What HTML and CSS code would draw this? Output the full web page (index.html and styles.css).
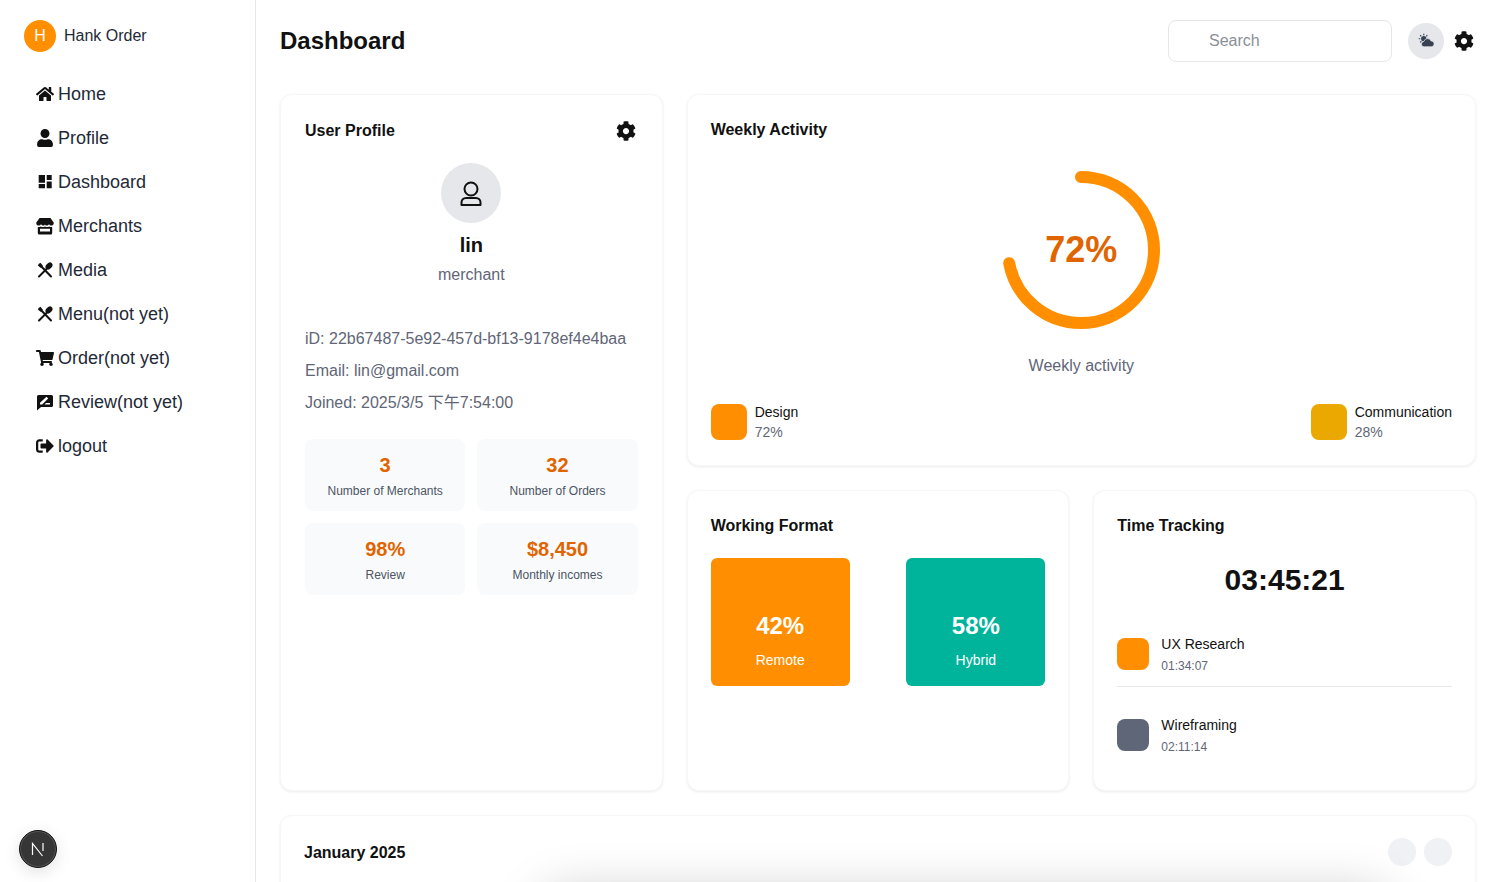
FILE: index.html
```html
<!DOCTYPE html>
<html>
<head>
    <meta charset="UTF-8">
    <title>Hank Order: Dashboard</title>
    <link rel="stylesheet" href="styles.css">
</head>
<body>
    <div class="app">
        <aside class="sidebar">
            <div class="brand">
                <span class="brand-avatar">H</span>
                <span class="brand-name">Hank Order</span>
            </div>
            <nav class="nav">
                <a class="nav-item" href="#">
                    <svg class="nav-icon" viewBox="0 0 576 512"><path d="M280.37 148.26L96 300.11V464a16 16 0 0 0 16 16l112.06-.29a16 16 0 0 0 15.92-16V368a16 16 0 0 1 16-16h64a16 16 0 0 1 16 16v95.64a16 16 0 0 0 16 16.05L464 480a16 16 0 0 0 16-16V300L295.67 148.26a12.19 12.19 0 0 0-15.3 0zM571.6 251.47L488 182.56V44.05a12 12 0 0 0-12-12h-56a12 12 0 0 0-12 12v72.61L318.47 43a48 48 0 0 0-61 0L4.34 251.47a12 12 0 0 0-1.6 16.9l25.5 31A12 12 0 0 0 45.15 301l235.22-193.74a12.19 12.19 0 0 1 15.3 0L530.9 301a12 12 0 0 0 16.9-1.6l25.5-31a12 12 0 0 0-1.7-16.93z"/></svg>
                    Home
                </a>
                <a class="nav-item" href="#">
                    <svg class="nav-icon" viewBox="0 0 448 512"><path d="M224 256c70.7 0 128-57.3 128-128S294.7 0 224 0 96 57.3 96 128s57.3 128 128 128zm89.6 32h-16.7c-22.2 10.2-46.9 16-72.9 16s-50.6-5.8-72.9-16h-16.7C60.2 288 0 348.2 0 422.4V464c0 26.5 21.5 48 48 48h352c26.5 0 48-21.5 48-48v-41.6c0-74.2-60.2-134.4-134.4-134.4z"/></svg>
                    Profile
                </a>
                <a class="nav-item" href="#">
                    <svg class="nav-icon" viewBox="0 0 18 18"><path d="M2.700 2H9v7.700H2.700zM10.700 2h5v5h-5zM10.700 8.500h5v6.800h-5zM2.700 11H9v4.300H2.700z"/></svg>
                    Dashboard
                </a>
                <a class="nav-item" href="#">
                    <svg class="nav-icon" viewBox="0 0 18 18"><path d="M3.500 1h11l3.300 4.700c0 1.800-1 2.900-2.500 2.900-1 0-1.800-.5-2.300-1.300-.5.8-1.400 1.300-2.300 1.300-.9 0-1.700-.5-1.700-1.300 0 .8-.8 1.300-1.700 1.300-.9 0-1.800-.5-2.300-1.300-.5.8-1.300 1.300-2.300 1.300C1.200 8.600.2 7.500.2 5.700zM1.800 10c1.100.2 2.200 0 3-.5 1.300.8 2.900.8 4.200 0 1.300.8 2.900.8 4.200 0 .8.5 1.900.7 3 .5v6a1.500 1.500 0 0 1-1.500 1.500H3.300A1.500 1.500 0 0 1 1.800 16zm2.200 1.800v2.800h10v-2.800z"/></svg>
                    Merchants
                </a>
                <a class="nav-item" href="#">
                    <svg class="nav-icon" viewBox="0 0 18 18"><use href="#utensils"/></svg>
                    Media
                </a>
                <a class="nav-item" href="#">
                    <svg class="nav-icon" viewBox="0 0 18 18"><use href="#utensils"/></svg>
                    Menu(not yet)
                </a>
                <a class="nav-item" href="#">
                    <svg class="nav-icon" viewBox="0 0 576 512"><path d="M528.12 301.319l47.273-208C578.806 78.301 567.391 64 551.99 64H159.208l-9.166-44.81C147.758 8.021 137.93 0 126.529 0H24C10.745 0 0 10.745 0 24v16c0 13.255 10.745 24 24 24h69.883l70.248 343.435C147.325 417.1 136 435.222 136 456c0 30.928 25.072 56 56 56s56-25.072 56-56c0-15.674-6.447-29.835-16.824-40h209.647C430.447 426.165 424 440.326 424 456c0 30.928 25.072 56 56 56s56-25.072 56-56c0-22.172-12.888-41.332-31.579-50.405l5.517-24.276c3.413-15.018-8.002-29.319-23.403-29.319H218.117l-6.545-32h293.145c11.206 0 20.92-7.754 23.403-18.681z"/></svg>
                    Order(not yet)
                </a>
                <a class="nav-item" href="#">
                    <svg class="nav-icon" viewBox="0 0 18 18"><path fill-rule="evenodd" d="M2.500 2h13A1.500 1.500 0 0 1 17 3.500v9a1.500 1.500 0 0 1-1.500 1.500H5l-4 3.500V3.500A1.500 1.500 0 0 1 2.500 2zM4 11.500h2.200l6-6-1.700-1.700-6.500 6zM8.500 11.500H14V10H10z"/></svg>
                    Review(not yet)
                </a>
                <a class="nav-item" href="#">
                    <svg class="nav-icon" viewBox="0 0 512 512"><path d="M497 273L329 441c-15 15-41 4.500-41-17v-96H152c-13.300 0-24-10.700-24-24v-96c0-13.300 10.700-24 24-24h136V88c0-21.400 25.900-32 41-17l168 168c9.300 9.400 9.300 24.600 0 34zM192 436v-40c0-6.600-5.400-12-12-12H96c-17.700 0-32-14.300-32-32V160c0-17.700 14.300-32 32-32h84c6.600 0 12-5.400 12-12V76c0-6.600-5.400-12-12-12H96c-53 0-96 43-96 96v192c0 53 43 96 96 96h84c6.600 0 12-5.400 12-12z"/></svg>
                    logout
                </a>
            </nav>
        </aside>

        <main class="main">
            <header class="topbar">
                <h1 class="page-title">Dashboard</h1>
                <div class="topbar-right">
                    <input class="search" type="text" placeholder="Search">
                    <button class="weather-btn">
                        <svg class="weather-icon" viewBox="0 0 18 18">
                            <circle cx="6.500" cy="6.500" r="3"/>
                            <path d="M6.500.8v1.700M2.500 2.500l1.200 1.200M.8 6.500h1.700M2.500 10.500l1.200-1.200M10.500 2.500L9.300 3.700" stroke="#374151" stroke-width="1.300" fill="none"/>
                            <path d="M7 15.500a3 3 0 0 1-.4-6 4.300 4.300 0 0 1 8.100-.6 3.300 3.300 0 0 1 .3 6.600z" stroke="#e5e7eb" stroke-width=".8"/>
                        </svg>
                    </button>
                    <svg class="cog" viewBox="0 0 512 512"><use href="#cog"/></svg>
                </div>
            </header>

            <div class="grid">
                <section class="card profile-card">
                    <div class="card-head">
                        <h2 class="card-title">User Profile</h2>
                        <svg class="cog" viewBox="0 0 512 512"><use href="#cog"/></svg>
                    </div>
                    <div class="profile-top">
                        <div class="profile-avatar">
                            <svg viewBox="0 0 30 30" width="30" height="30" fill="none" stroke="#111" stroke-width="2"><circle cx="15" cy="11" r="6.500"/><path d="M5.500 27v-2.500c0-2.500 2-4.500 4.500-4.500h10c2.500 0 4.500 2 4.500 4.500V27z" stroke-linejoin="round"/></svg>
                        </div>
                        <div class="profile-name">lin</div>
                        <div class="profile-role">merchant</div>
                    </div>
                    <div class="profile-info">
                        <p>iD: 22b67487-5e92-457d-bf13-9178ef4e4baa</p>
                        <p>Email: lin@gmail.com</p>
                        <p>Joined: 2025/3/5 下午7:54:00</p>
                    </div>
                    <div class="stats">
                        <div class="stat"><strong>3</strong><span>Number of Merchants</span></div>
                        <div class="stat"><strong>32</strong><span>Number of Orders</span></div>
                        <div class="stat"><strong>98%</strong><span>Review</span></div>
                        <div class="stat"><strong>$8,450</strong><span>Monthly incomes</span></div>
                    </div>
                </section>

                <section class="card weekly-card">
                    <h2 class="card-title">Weekly Activity</h2>
                    <div class="ring-wrap">
                        <svg class="ring" viewBox="0 0 160 160">
                            <circle cx="80" cy="80" r="73" fill="none" stroke="#ff8f00" stroke-width="12" stroke-linecap="round" stroke-dasharray="330.2 458.7" transform="rotate(-90 80 80)"/>
                        </svg>
                        <span class="ring-value">72%</span>
                    </div>
                    <div class="ring-label">Weekly activity</div>
                    <div class="legend">
                        <div class="legend-item">
                            <span class="swatch swatch-big orange"></span>
                            <div><div class="item-name">Design</div><div class="item-sub">72%</div></div>
                        </div>
                        <div class="legend-item">
                            <span class="swatch swatch-big amber"></span>
                            <div><div class="item-name">Communication</div><div class="item-sub">28%</div></div>
                        </div>
                    </div>
                </section>

                <section class="card format-card">
                    <h2 class="card-title">Working Format</h2>
                    <div class="format-grid">
                        <div class="format-box orange"><strong>42%</strong><span>Remote</span></div>
                        <div class="format-box teal"><strong>58%</strong><span>Hybrid</span></div>
                    </div>
                </section>

                <section class="card time-card">
                    <h2 class="card-title">Time Tracking</h2>
                    <div class="clock">03:45:21</div>
                    <div class="time-row with-line">
                        <span class="swatch orange"></span>
                        <div><div class="item-name">UX Research</div><div class="item-time">01:34:07</div></div>
                    </div>
                    <div class="time-row">
                        <span class="swatch slate"></span>
                        <div><div class="item-name">Wireframing</div><div class="item-time">02:11:14</div></div>
                    </div>
                </section>

                <section class="card calendar-card">
                    <h2 class="card-title">January 2025</h2>
                    <div class="cal-btns"><span class="cal-btn"></span><span class="cal-btn"></span></div>
                </section>
            </div>
        </main>
    </div>

    <!-- floating stuff on top of the page -->
    <div class="bottom-shade"></div>
    <div class="dev-badge">
        <svg viewBox="0 0 16 16" width="16" height="16" fill="none" stroke="#fff" stroke-width="1.200"><path d="M2.500 14V2.500l10 12.500M13 2v8"/></svg>
    </div>

    <svg class="defs" width="0" height="0">
        <defs>
            <path id="cog" d="M487.400 315.700l-42.600-24.600c4.300-23.200 4.300-47 0-70.200l42.600-24.600c4.900-2.800 7.100-8.600 5.500-14-11.100-35.600-30-67.800-54.700-94.600-3.800-4.100-10-5.100-14.800-2.300L380.800 110c-17.900-15.400-38.500-27.300-60.800-35.100V25.800c0-5.600-3.900-10.500-9.400-11.700-36.700-8.200-74.300-7.800-109.200 0-5.500 1.200-9.400 6.100-9.400 11.700V75c-22.200 7.900-42.800 19.800-60.800 35.100L88.700 85.500c-4.900-2.800-11-1.900-14.800 2.300-24.700 26.700-43.600 58.900-54.700 94.600-1.700 5.400.6 11.200 5.500 14L67.300 221c-4.300 23.200-4.300 47 0 70.200l-42.600 24.600c-4.900 2.800-7.100 8.600-5.500 14 11.100 35.600 30 67.800 54.700 94.600 3.800 4.100 10 5.100 14.800 2.300l42.600-24.600c17.900 15.400 38.500 27.300 60.800 35.100v49.200c0 5.600 3.900 10.500 9.400 11.700 36.700 8.200 74.300 7.800 109.200 0 5.500-1.200 9.400-6.100 9.400-11.700v-49.200c22.200-7.900 42.800-19.800 60.800-35.100l42.600 24.600c4.900 2.800 11 1.900 14.800-2.300 24.700-26.700 43.600-58.900 54.700-94.600 1.500-5.500-.7-11.300-5.600-14.100zM256 336c-44.100 0-80-35.900-80-80s35.900-80 80-80 80 35.900 80 80-35.900 80-80 80z"/>
            <g id="utensils">
                <path d="M3.500 3.500L15 15.500" stroke="#111" stroke-width="2" fill="none" stroke-linecap="round"/>
                <path d="M1.800 4.500L4.500 1.800 7 5 5 7z"/>
                <path d="M3 15.500l7.500-7.500" stroke="#111" stroke-width="2" fill="none" stroke-linecap="round"/>
                <ellipse cx="13" cy="5" rx="2.800" ry="4" transform="rotate(45 13 5)"/>
            </g>
        </defs>
    </svg>
</body>
</html>
```

FILE: styles.css
```css
* {
    box-sizing: border-box;
}

html, body {
    height: 100%;
    margin: 0;
    overflow: hidden;
}

body {
    background: #fff;
    color: #111827;
    font-family: "Liberation Sans", "Noto Sans CJK SC", sans-serif;
}

.app {
    display: flex;
    height: 882px;
    overflow: hidden;
}

/* sidebar */
.sidebar {
    width: 256px;
    flex-shrink: 0;
    border-right: 1px solid #e5e7eb;
    padding: 20px 24px;
}

.brand {
    display: flex;
    align-items: center;
    gap: 8px;
    margin-bottom: 20px;
}

.brand-avatar {
    width: 32px;
    height: 32px;
    border-radius: 50%;
    background: #ff8f00;
    color: #fff;
    display: flex;
    align-items: center;
    justify-content: center;
    font-size: 16px;
}

.brand-name {
    font-size: 16px;
    color: #1f2937;
}

.nav {
    display: flex;
    flex-direction: column;
}

.nav-item {
    height: 44px;
    display: flex;
    align-items: center;
    gap: 4px;
    padding-left: 12px;
    font-size: 18px;
    color: #1f2937;
    text-decoration: none;
}

.nav-icon {
    width: 18px;
    height: 18px;
    fill: #111;
    flex-shrink: 0;
}

/* main */
.main {
    flex: 1;
    min-width: 0;
    height: 882px;
    overflow: hidden;
    padding: 20px 24px 0;
}

.topbar {
    display: flex;
    align-items: center;
    justify-content: space-between;
    margin-bottom: 32px;
}

.page-title {
    margin: 0;
    font-size: 24px;
    font-weight: 700;
    color: #111;
}

.topbar-right {
    display: flex;
    align-items: center;
    gap: 16px;
    padding-right: 2px;
}

.search {
    width: 224px;
    height: 42px;
    border: 1px solid #e5e7eb;
    border-radius: 8px;
    padding: 0 16px 0 40px;
    font: inherit;
    font-size: 16px;
    outline: none;
}

.search::placeholder {
    color: #8b8f98;
}

.weather-btn {
    width: 36px;
    height: 36px;
    border: 0;
    border-radius: 50%;
    background: #e5e7eb;
    display: flex;
    align-items: center;
    justify-content: center;
    padding: 0;
    margin-right: -6px;
}

.weather-icon {
    width: 16px;
    height: 16px;
    fill: #374151;
}

.cog {
    width: 20px;
    height: 20px;
    fill: #111;
    flex-shrink: 0;
}

.grid {
    display: grid;
    grid-template-columns: repeat(3, 1fr);
    grid-template-rows: 372px 301px auto;
    gap: 24px;
}

.card {
    background: #fff;
    border: 1px solid #f6f7f8;
    border-radius: 12px;
    box-shadow: 0 1px 3px rgba(0, 0, 0, 0.08);
    padding: 23px;
}

.card-title {
    margin: 0;
    font-size: 16px;
    line-height: 24px;
    font-weight: 700;
    color: #111;
}

/* profile */
.profile-card {
    grid-row: 1 / 3;
    padding: 24px;
}

.card-head {
    display: flex;
    justify-content: space-between;
    align-items: center;
    padding-right: 2px;
}

.profile-top {
    display: flex;
    flex-direction: column;
    align-items: center;
    margin-top: 20px;
}

.profile-avatar {
    width: 60px;
    height: 60px;
    border-radius: 50%;
    background: #e5e7eb;
    display: flex;
    align-items: center;
    justify-content: center;
}

.profile-name {
    font-size: 20px;
    font-weight: 700;
    line-height: 24px;
    margin-top: 10px;
    color: #111;
}

.profile-role {
    font-size: 16px;
    line-height: 20px;
    margin-top: 8px;
    color: #5f6677;
}

.profile-info {
    margin-top: 42px;
    font-size: 16px;
    color: #5f6677;
}

.profile-info p {
    margin: 0;
    height: 32px;
    line-height: 24px;
}

.stats {
    display: grid;
    grid-template-columns: 1fr 1fr;
    gap: 12px;
    margin-top: 16px;
}

.stat {
    height: 72px;
    background: #f9fafb;
    border-radius: 8px;
    display: flex;
    flex-direction: column;
    align-items: center;
    padding-top: 14px;
}

.stat strong {
    font-size: 20px;
    line-height: 24px;
    color: #e06500;
}

.stat span {
    font-size: 12px;
    line-height: 16px;
    margin-top: 6px;
    color: #4b5563;
}

/* weekly */
.weekly-card {
    grid-column: 2 / 4;
}

.ring-wrap {
    position: relative;
    width: 160px;
    height: 160px;
    margin: 28px auto 0;
}

.ring {
    display: block;
    width: 160px;
    height: 160px;
}

.ring-value {
    position: absolute;
    inset: 0;
    display: flex;
    align-items: center;
    justify-content: center;
    font-size: 36px;
    font-weight: 700;
    color: #e06500;
}

.ring-label {
    text-align: center;
    font-size: 16px;
    line-height: 20px;
    margin-top: 26px;
    color: #5f6677;
}

.legend {
    display: flex;
    justify-content: space-between;
    margin-top: 26px;
}

.legend-item {
    display: flex;
    align-items: center;
    gap: 8px;
}

.swatch {
    width: 32px;
    height: 32px;
    border-radius: 8px;
    flex-shrink: 0;
}

.swatch-big {
    width: 36px;
    height: 36px;
}

.orange { background: #ff8f00; }
.amber { background: #eaa800; }
.teal { background: #00b39b; }
.slate { background: #5f6677; }

.item-name {
    font-size: 14px;
    line-height: 20px;
    color: #111;
}

.item-sub {
    font-size: 14px;
    line-height: 20px;
    color: #5f6677;
}

.item-time {
    font-size: 12px;
    line-height: 16px;
    margin-top: 4px;
    color: #5f6677;
}

/* working format */
.format-grid {
    display: grid;
    grid-template-columns: 139px 139px;
    justify-content: space-between;
    margin-top: 20px;
}

.format-box {
    height: 128px;
    border-radius: 6px;
    color: #fff;
    display: flex;
    flex-direction: column;
    align-items: center;
    justify-content: flex-end;
    gap: 8px;
    padding-bottom: 16px;
}

.format-box strong {
    font-size: 24px;
    line-height: 32px;
}

.format-box span {
    font-size: 14px;
    line-height: 20px;
}

/* time tracking */
.clock {
    text-align: center;
    font-size: 30px;
    font-weight: 700;
    line-height: 36px;
    margin-top: 24px;
    color: #111;
}

.time-row {
    display: flex;
    align-items: center;
    gap: 12px;
    margin-top: 28px;
}

.with-line {
    border-bottom: 1px solid #e5e7eb;
    margin-top: 36px;
    padding-bottom: 12px;
}

/* calendar */
.calendar-card {
    grid-column: 1 / 4;
    height: 120px;
    display: flex;
    justify-content: space-between;
    align-items: flex-start;
    padding-top: 22px;
}

.calendar-card .card-title {
    margin-top: 3px;
}

.cal-btns {
    display: flex;
    gap: 8px;
}

.cal-btn {
    width: 28px;
    height: 28px;
    border-radius: 50%;
    background: #f0f1f4;
}

/* overlays */
.bottom-shade {
    position: fixed;
    left: 545px;
    right: 115px;
    top: 898px;
    height: 40px;
    border-radius: 20px;
    box-shadow: 0 0 50px 5px rgba(0, 0, 0, 0.22);
}

.dev-badge {
    position: fixed;
    left: 19px;
    top: 830px;
    width: 38px;
    height: 38px;
    border-radius: 50%;
    background: #363636;
    border: 1px solid #111;
    box-shadow: 0 0 0 1px #555 inset, 0 4px 16px rgba(0, 0, 0, 0.12);
    display: flex;
    align-items: center;
    justify-content: center;
}

.defs {
    position: absolute;
}
```
